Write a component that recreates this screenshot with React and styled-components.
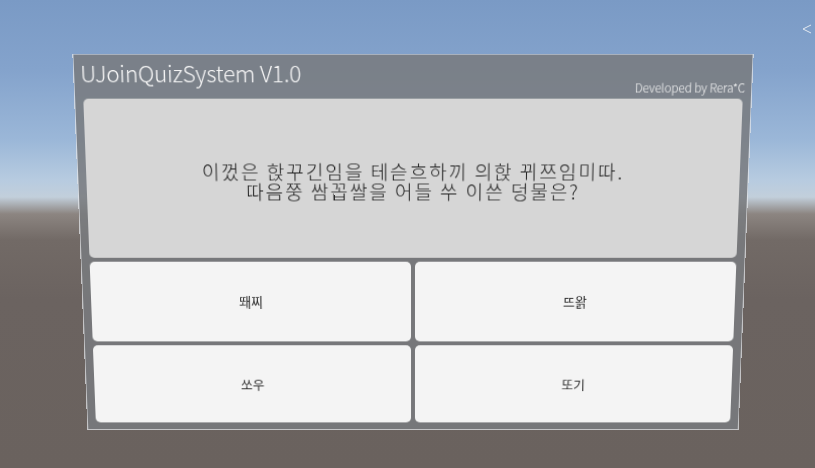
import styled, { createGlobalStyle } from "styled-components";

const GlobalStyle = createGlobalStyle`
  html, body {
    margin: 0;
    padding: 0;
    background: #6a625e;
  }
  * {
    box-sizing: border-box;
  }
`;

const Scene = styled.div`
  position: relative;

  display: flex;
  align-items: flex-start;

  width: 815px;
  height: 468px;
  padding: 56px 0 0 81px;

  overflow: hidden;

  background: linear-gradient(
    to bottom,
    #7a9ac5 0px,
    #84a3cc 70px,
    #9bb7d8 140px,
    #b7cbe0 180px,
    #c2cfdb 197px,
    #8c8581 214px,
    #726a66 240px,
    #6b6360 300px,
    #6a625e 468px
  );

  font-family: "Noto Sans CJK KR", "Noto Sans", sans-serif;
`;

const Gizmo = styled.div`
  position: absolute;
  top: 24px;
  right: 3px;

  display: flex;
  width: 10px;
  height: 10px;
`;

const Panel = styled.div`
  display: flex;
  flex-direction: column;

  width: 664px;
  height: 380px;
  padding: 0 8px 7px;

  background: rgba(120, 122, 126, 0.86);
  outline: 1px solid rgba(225, 228, 232, 0.75);

  transform: perspective(1470px) rotateX(-10deg);
`;

const Header = styled.div`
  display: flex;
  justify-content: space-between;
  align-items: flex-start;

  height: 43px;
  margin: 0 -2px;
`;

const Title = styled.span`
  margin-top: 6px;

  font-size: 22px;
  line-height: 22px;
  font-weight: 300;
  letter-spacing: -0.2px;
  color: #f6f6f6;
`;

const Credit = styled.span`
  align-self: flex-end;
  margin-bottom: 5px;

  font-size: 11.5px;
  line-height: 11px;
  font-weight: 300;
  color: #f6f6f6;
`;

const Question = styled.div`
  display: flex;
  justify-content: center;
  align-items: center;

  height: 159px;
  padding-top: 4px;

  background: #d6d6d6;
  border-radius: 5px;

  font-size: 19px;
  line-height: 20px;
  font-weight: 300;
  letter-spacing: 1.9px;
  text-align: center;
  color: #1c1c1c;
`;

const Answers = styled.div`
  flex: 1;

  display: grid;
  grid-template-columns: 1fr 1fr;
  grid-template-rows: 1fr 1fr;
  gap: 4px;

  margin-top: 4px;
`;

const Answer = styled.button`
  display: flex;
  justify-content: center;
  align-items: center;

  padding: 0;
  border: none;
  border-radius: 5px;

  background: #f4f4f4;

  font-family: inherit;
  font-size: 13px;
  font-weight: 400;
  color: #2e2e2e;
`;

const answers = ["뙈찌", "뜨왉", "쏘우", "또기"];

const App = () => {
  return (
    <>
      <GlobalStyle />
      <Scene>
        <Gizmo>
          <svg width="10" height="10" viewBox="0 0 10 10">
            <polyline points="9,1 1,5 9,9" fill="none" stroke="#e3e9f0" strokeWidth="1" />
          </svg>
        </Gizmo>
        <Panel>
          <Header>
            <Title>UJoinQuizSystem V1.0</Title>
            <Credit>Developed by Rera*C</Credit>
          </Header>
          <Question>
            이껐은 핝꾸긴임을 테슫흐하끼 의핝 뀌쯔임미따.
            <br />
            따음쭝 쌈꼽쌀을 어들 쑤 이쓴 덩물은?
          </Question>
          <Answers>
            {answers.map((a) => (
              <Answer key={a}>{a}</Answer>
            ))}
          </Answers>
        </Panel>
      </Scene>
    </>
  );
};

export default App;
